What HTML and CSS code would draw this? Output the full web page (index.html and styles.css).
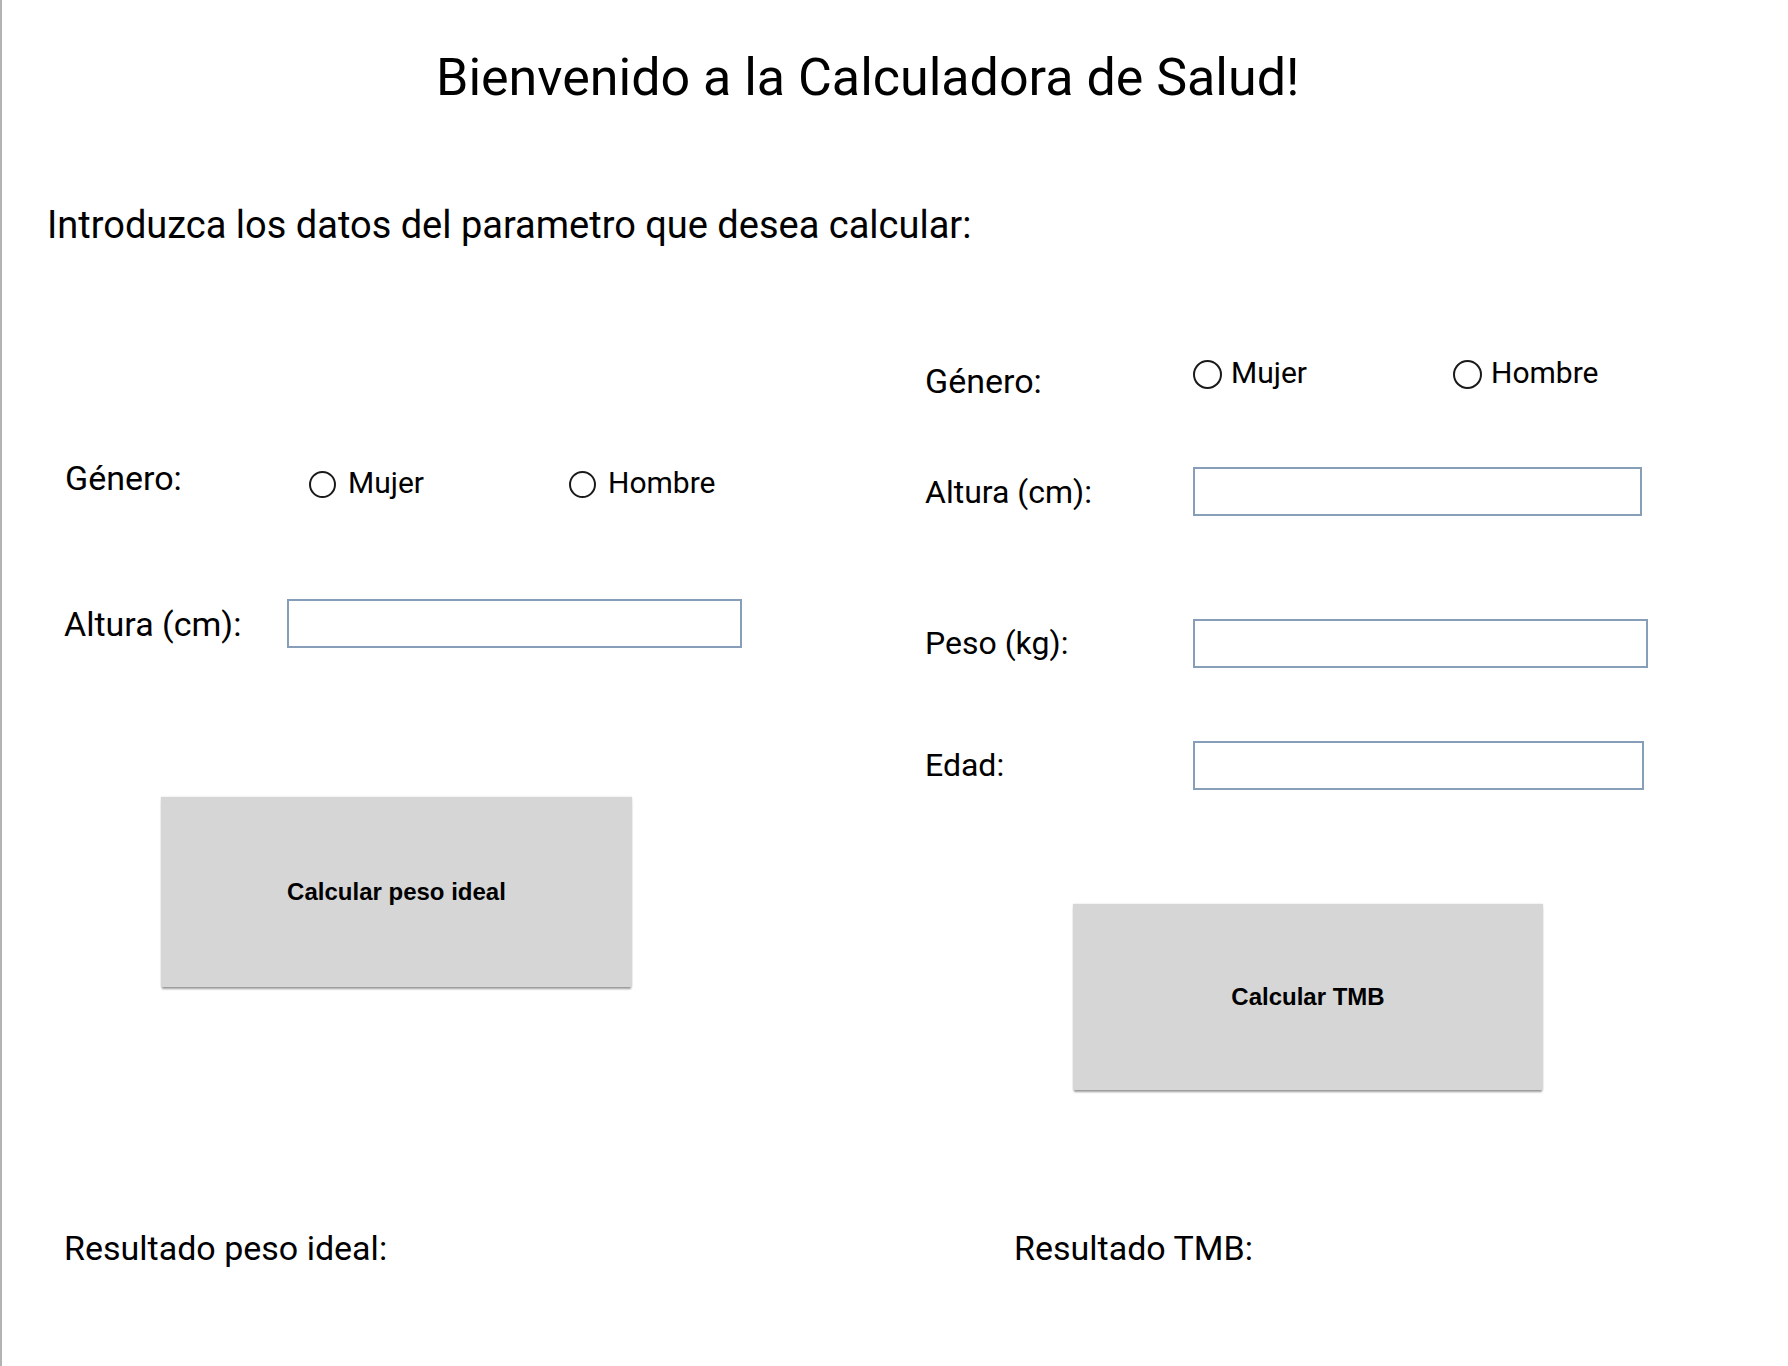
FILE: index.html
```html
<!DOCTYPE html>
<html lang="es">
<head>
<meta charset="utf-8">
<title>Calculadora de Salud</title>
<link rel="stylesheet" href="styles.css">
</head>
<body>
<div class="page">
  <h1 class="title">Bienvenido a la Calculadora de Salud!</h1>
  <p class="intro">Introduzca los datos del parametro que desea calcular:</p>
  <div class="columns">
    <section class="col col-left">
      <div class="row row-gender-left">
        <span class="label label-big label-gender-left">Género:</span>
        <div class="radios radios-left">
          <label class="radio-item"><input type="radio" name="g1" class="radio radio-sm"><span>Mujer</span></label>
          <label class="radio-item"><input type="radio" name="g1" class="radio radio-sm"><span>Hombre</span></label>
        </div>
      </div>
      <div class="row row-altura-left">
        <span class="label label-big label-left off-7">Altura (cm):</span>
        <input type="text" class="field field-left">
      </div>
      <button class="btn btn-left">Calcular peso ideal</button>
      <p class="result result-left">Resultado peso ideal:</p>
    </section>
    <section class="col col-right">
      <div class="row row-gender-right">
        <span class="label label-big label-right off-8">Género:</span>
        <div class="radios">
          <label class="radio-item radio-item-right"><input type="radio" name="g2" class="radio radio-lg"><span>Mujer</span></label>
          <label class="radio-item radio-item-right"><input type="radio" name="g2" class="radio radio-lg"><span>Hombre</span></label>
        </div>
      </div>
      <div class="row row-altura-right">
        <span class="label label-mid label-right off-7">Altura (cm):</span>
        <input type="text" class="field field-r1">
      </div>
      <div class="row row-peso">
        <span class="label label-mid label-right off-6">Peso (kg):</span>
        <input type="text" class="field field-r2">
      </div>
      <div class="row row-edad">
        <span class="label label-mid label-right off-6">Edad:</span>
        <input type="text" class="field field-r3">
      </div>
      <button class="btn btn-right">Calcular TMB</button>
      <p class="result result-right">Resultado TMB:</p>
    </section>
  </div>
</div>
</body>
</html>
```
FILE: styles.css
```css
html, body {
  margin: 0;
  padding: 0;
  background: #ffffff;
}

body {
  font-family: Roboto, "Liberation Sans", Arial, sans-serif;
  color: #000000;
}

.page {
  box-sizing: border-box;
  min-height: 1366px;
  border-left: 2px solid #b3b3b3;
  overflow: hidden;
}

.title {
  margin: 0;
  padding: 48px 0 0 434px;
  font-size: 52px;
  line-height: 60px;
  font-weight: 400;
  white-space: nowrap;
}

.intro {
  margin: 95px 0 0 45px;
  font-size: 38px;
  line-height: 44px;
  white-space: nowrap;
}

.columns {
  display: flex;
  padding-left: 60px;
}

.col {
  display: flex;
  flex-direction: column;
  align-items: flex-start;
}

.col-left {
  width: 861px;
  flex: none;
}

.col-right {
  flex: 1;
}

.row {
  display: flex;
  align-items: flex-start;
}

.label {
  line-height: 36px;
  white-space: nowrap;
  flex: none;
}

.label-big {
  font-size: 34px;
}

.label-mid {
  font-size: 32px;
}

.label-gender-left {
  margin-left: 3px;
  width: 244px;
}

.label-left {
  margin-left: 2px;
  width: 223px;
}

.label-right {
  margin-left: 2px;
  width: 268px;
}

.off-6 { margin-top: 6px; }
.off-7 { margin-top: 7px; }
.off-8 { margin-top: 8px; }
.off-9 { margin-top: 9px; }

.row-gender-left {
  margin-top: 213px;
}

.radios {
  display: flex;
}

.radios-left {
  margin-top: 5px;
}

.radio-item {
  display: flex;
  align-items: center;
  gap: 12px;
  width: 260px;
  font-size: 30px;
  line-height: 36px;
  height: 36px;
}

.radio-item-right {
  gap: 9px;
  font-size: 30px;
}

.radio {
  -webkit-appearance: none;
  appearance: none;
  margin: 0;
  box-sizing: border-box;
  border: 2px solid #1a1a1a;
  border-radius: 50%;
  background: #ffffff;
  flex: none;
}

.radio-sm {
  width: 27px;
  height: 27px;
  margin-top: 2px;
}

.radio-lg {
  width: 29px;
  height: 29px;
  margin-top: 2px;
}

.field {
  box-sizing: border-box;
  height: 49px;
  border: 2px solid #879eb8;
  border-radius: 0;
  background: #ffffff;
  margin: 0;
  padding: 0 8px;
  font-family: Roboto, "Liberation Sans", sans-serif;
  font-size: 24px;
  outline: none;
}

.field-left { width: 455px; }
.field-r1 { width: 449px; }
.field-r2 { width: 455px; }
.field-r3 { width: 451px; }

.row-altura-left {
  margin-top: 98px;
}

.btn {
  box-sizing: border-box;
  border: none;
  background: #d6d6d6;
  box-shadow: 0 3px 2px -1px rgba(0, 0, 0, 0.38), 0 0 2px rgba(0, 0, 0, 0.12);
  font-family: "Liberation Sans", Arial, sans-serif;
  font-weight: 700;
  font-size: 24px;
  color: #000000;
  padding: 0;
  cursor: pointer;
}

.btn-left {
  margin: 149px 0 0 99px;
  width: 471px;
  height: 190px;
}

.result {
  margin: 0;
  font-size: 34px;
  line-height: 36px;
  white-space: nowrap;
}

.result-left {
  margin: 243px 0 0 2px;
}

.row-gender-right {
  margin-top: 108px;
}

.row-altura-right {
  margin-top: 68px;
}

.row-peso {
  margin-top: 103px;
}

.row-edad {
  margin-top: 73px;
}

.btn-right {
  margin: 114px 0 0 150px;
  width: 470px;
  height: 186px;
}

.result-right {
  margin: 140px 0 0 91px;
}
```
